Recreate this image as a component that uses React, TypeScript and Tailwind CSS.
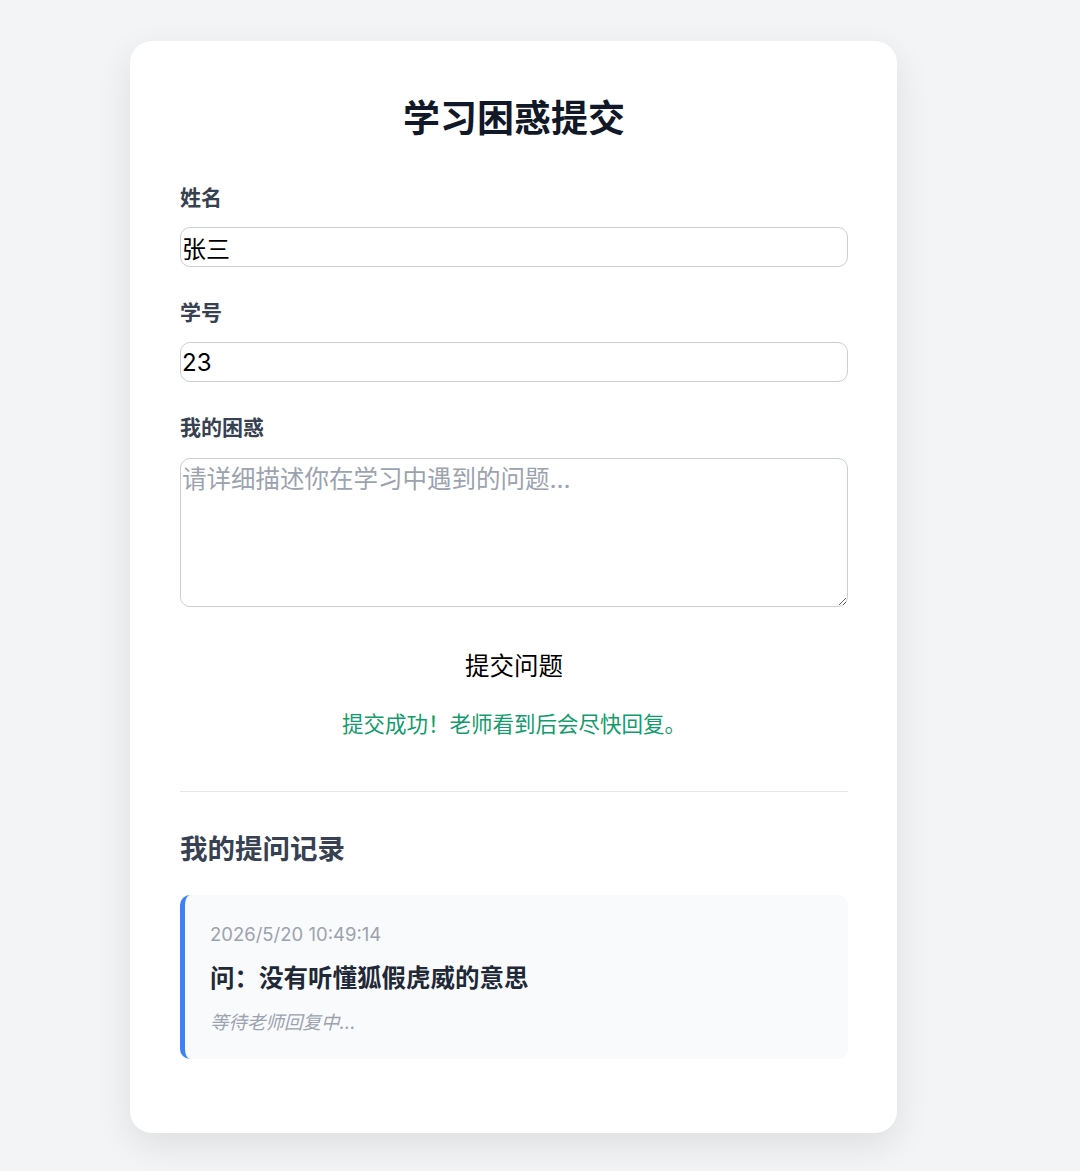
import { useState } from "react";

const cjk = { fontFamily: '"Inter", "Noto Sans CJK SC", sans-serif' };

export default function App() {
  const [name, setName] = useState("张三");
  const [studentId, setStudentId] = useState("23");
  const [question, setQuestion] = useState("");

  return (
    <div className="min-h-screen bg-[#f3f4f6] pt-[41px] pb-10" style={cjk}>
      <div className="ml-[130px] w-[767px] rounded-[22px] bg-white pl-[50px] pr-[49px] pt-[51px] pb-[74px] shadow-[0_12px_36px_rgba(0,0,0,0.09)]">
        {/* Header */}
        <h1 className="text-center text-[37px] leading-[54px] font-bold text-[#111827]">
          学习困惑提交
        </h1>

        {/* Form */}
        <div className="mt-[37px]">
          <label className="block text-[21px] leading-[30px] font-bold text-[#374151]">姓名</label>
          <input
            value={name}
            onChange={(e) => setName(e.target.value)}
            className="mt-[14px] block h-[40px] w-full rounded-[10px] border-[1.5px] border-[#c9ced6] bg-white px-[1px] text-[24px] text-black outline-none"
          />
        </div>

        <div className="mt-[31px]">
          <label className="block text-[21px] leading-[30px] font-bold text-[#374151]">学号</label>
          <input
            value={studentId}
            onChange={(e) => setStudentId(e.target.value)}
            className="mt-[14px] block h-[40px] w-full rounded-[10px] border-[1.5px] border-[#c9ced6] bg-white px-[1px] text-[24px] text-black outline-none"
          />
        </div>

        <div className="mt-[31px]">
          <label className="block text-[21px] leading-[30px] font-bold text-[#374151]">我的困惑</label>
          <textarea
            value={question}
            onChange={(e) => setQuestion(e.target.value)}
            placeholder="请详细描述你在学习中遇到的问题..."
            className="mt-[15px] block h-[149px] w-full rounded-[10px] border-[1.5px] border-[#c9ced6] bg-white px-[1px] py-0 text-[24.5px] leading-[40px] text-black outline-none placeholder:text-[#9ca3af]"
          />
        </div>

        <div className="mt-[44px] flex justify-center">
          <button className="text-[24.5px] leading-[30px] text-black">提交问题</button>
        </div>

        <p className="mt-[28px] text-center text-[21.5px] leading-[30px] text-[#129c6c]">
          提交成功！老师看到后会尽快回复。
        </p>

        <hr className="mt-[52px] border-t-[1.5px] border-[#e5e7eb]" />

        {/* History */}
        <h2 className="mt-[39px] text-[27.5px] leading-[36px] font-bold text-[#374151]">我的提问记录</h2>

        <div className="mt-[28px] rounded-[10px] border-l-[5px] border-[#3b82f6] bg-[#f9fafb] pl-[25px] pr-6 pt-[26px] pb-[24px]">
          <div className="text-[18.5px] leading-[26px] text-[#9ca3af]">2026/5/20 10:49:14</div>
          <div className="mt-[15px] text-[24.5px] leading-[32px] font-bold text-[#1f2937]">
            问：没有听懂狐假虎威的意思
          </div>
          <div className="mt-[15px] text-[18.5px] leading-[26px] italic text-[#9ca3af]">等待老师回复中...</div>
        </div>
      </div>
    </div>
  );
}
